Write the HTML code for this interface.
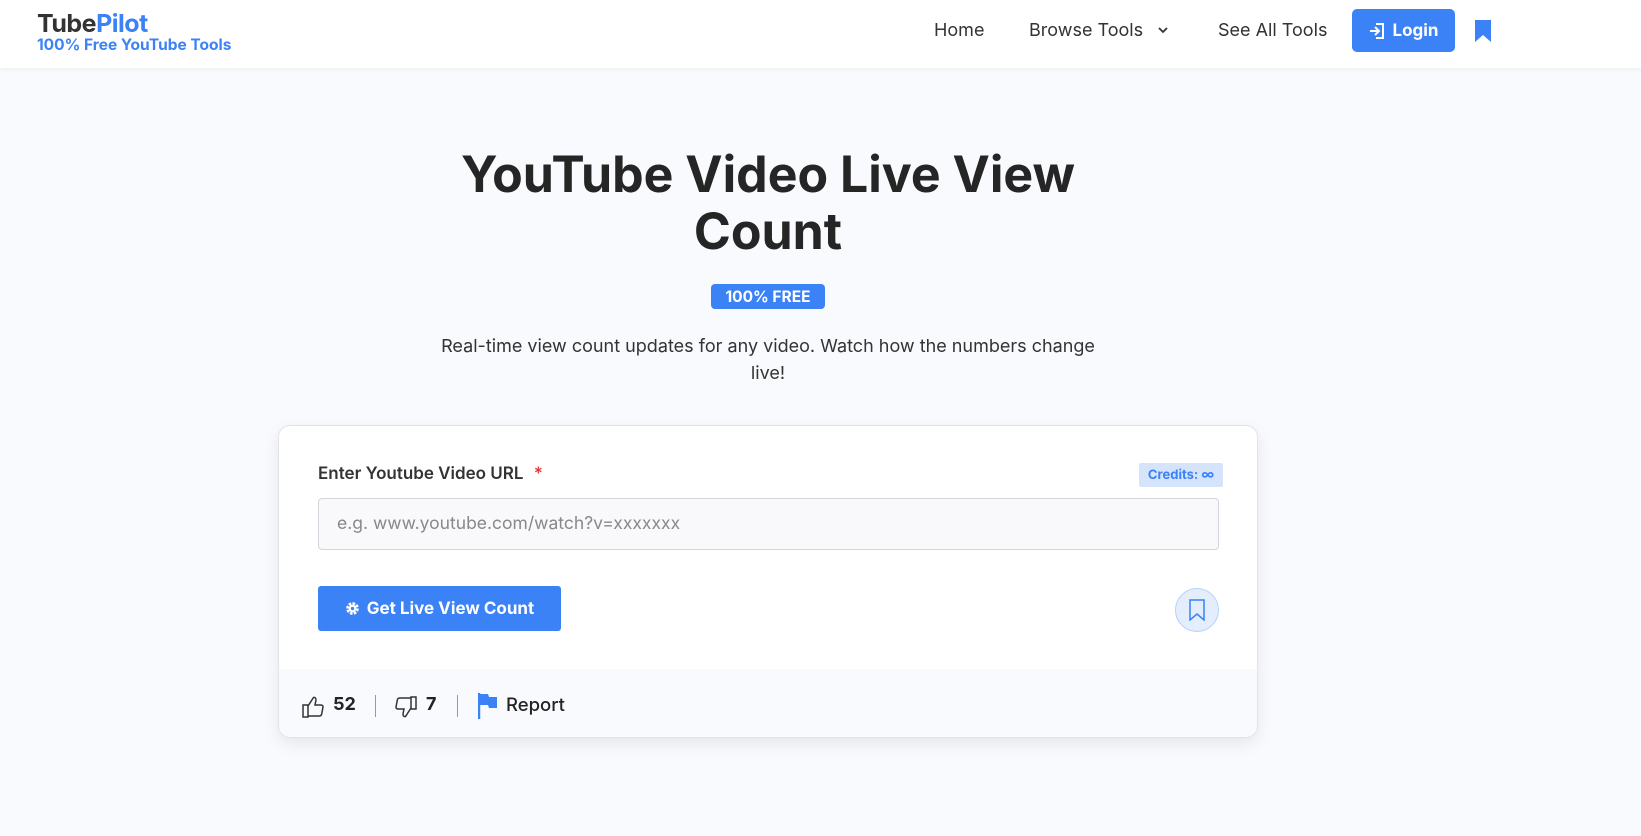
<!DOCTYPE html>
<html><head><meta charset="utf-8"><style>
*{box-sizing:border-box;margin:0;padding:0}
body{width:1641px;height:836px;background:#f9fafd;font-family:"Inter","Liberation Sans",sans-serif;color:#222;position:relative;overflow:hidden}
.hdr{position:absolute;left:0;top:0;width:1641px;height:68px;background:#fff;box-shadow:0 1px 4px rgba(0,0,0,.06)}
.abs{position:absolute}
.logo{left:37px;top:9px;font-size:25px;font-weight:700;color:#333;letter-spacing:-.5px}
.logo span{color:#3b82f6}
.sub{left:37px;top:35px;font-size:15.5px;font-weight:700;color:#3b82f6}
.nav{top:20px;font-size:18px;color:#333}
.login{left:1352px;top:9px;width:103px;height:43px;background:#3b82f6;border-radius:5px;color:#fff;font-weight:700;font-size:17px;display:flex;align-items:center;justify-content:center;gap:8px}
h1{position:absolute;left:0;width:1536px;top:147px;text-align:center;font-size:50px;font-weight:700;line-height:57px;color:#252525}
.badge{left:711px;top:284px;width:114px;height:25px;background:#3b82f6;color:#fff;border-radius:4px;font-weight:700;font-size:15.5px;text-align:center;line-height:25px}
.desc{left:0;width:1536px;top:333px;text-align:center;font-size:18px;line-height:27px;color:#333}
.card{left:278px;top:425px;width:980px;height:313px;background:#fff;border:1px solid #e1e3ea;border-radius:12px;box-shadow:0 6px 16px rgba(0,0,0,.08);overflow:hidden}
.foot{position:absolute;left:0;top:243px;width:100%;height:70px;background:#f9fafd}
</style></head><body>
<div class="hdr">
<div class="abs logo">Tube<span>Pilot</span></div>
<div class="abs sub">100% Free YouTube Tools</div>
<div class="abs nav" style="left:934px">Home</div>
<div class="abs nav" style="left:1029px">Browse Tools</div>
<svg class="abs" style="left:1157px;top:25px" width="12" height="10" viewBox="0 0 12 10"><path d="M2 3l4 4 4-4" fill="none" stroke="#333" stroke-width="1.8"/></svg>
<div class="abs nav" style="left:1218px">See All Tools</div>
<div class="abs login"><svg width="16" height="18" viewBox="0 0 16 18"><path d="M7 2h7v14H7" fill="none" stroke="#fff" stroke-width="2"/><path d="M1 9h8M6 5l4 4-4 4" fill="none" stroke="#fff" stroke-width="2"/></svg>Login</div>
<svg class="abs" style="left:1475px;top:20px" width="16" height="22" viewBox="0 0 16 22"><path d="M0 0h16v22l-8-7-8 7z" fill="#3b82f6"/></svg>
</div>
<h1>YouTube Video Live View<br>Count</h1>
<div class="abs badge">100% FREE</div>
<div class="abs desc">Real-time view count updates for any video. Watch how the numbers change<br>live!</div>
<div class="abs card">
<div class="abs" style="left:39px;top:38px;font-size:17px;font-weight:600;color:#333">Enter Youtube Video URL <span style="color:#e53935;margin-left:6px">*</span></div>
<div class="abs" style="left:860px;top:37px;width:84px;height:24px;background:#d6e4fb;color:#3b82f6;font-size:13px;font-weight:700;text-align:center;line-height:24px;border-radius:2px">Credits: ∞</div>
<div class="abs" style="left:39px;top:72px;width:901px;height:52px;border:1px solid #d4d6dd;border-radius:4px;background:#f9f9fc;font-size:17.5px;color:#888;padding:14px 18px">e.g. www.youtube.com/watch?v=xxxxxxx</div>
<div class="abs" style="left:39px;top:160px;width:243px;height:45px;background:#3b82f6;border-radius:3px;color:#fff;font-weight:700;font-size:17px;display:flex;align-items:center;justify-content:center;gap:7px"><svg width="15" height="15" viewBox="0 0 16 16"><circle cx="8" cy="8" r="5" fill="none" stroke="#fff" stroke-width="3.5" stroke-dasharray="2.6 1.3"/><circle cx="8" cy="8" r="4" fill="#fff"/><circle cx="8" cy="8" r="1.8" fill="#3b82f6"/></svg>Get Live View Count</div>
<div class="abs" style="left:896px;top:162px;width:44px;height:44px;border-radius:50%;background:#e3edfc;border:1px solid #b8d0fa;display:flex;align-items:center;justify-content:center"><svg width="16" height="22" viewBox="0 0 16 22"><path d="M1 1h14v20l-7-6-7 6z" fill="none" stroke="#3b82f6" stroke-width="1.5"/></svg></div>
<div class="foot">
<svg class="abs" style="left:22px;top:26px" width="24" height="24" viewBox="0 0 24 24"><path d="M2 10h5v12H2zM7 21h11c1.5 0 2.5-1 2.7-2l1.3-7c.2-1.2-.7-2-2-2h-6l1-5c.2-1.5-1-3-2.5-2.5L7 11" fill="none" stroke="#333" stroke-width="1.5"/></svg>
<div class="abs" style="left:54px;top:25px;font-size:18px;font-weight:700">52</div>
<div class="abs" style="left:96px;top:26px;width:1px;height:22px;background:#999"></div>
<svg class="abs" style="left:115px;top:26px" width="24" height="24" viewBox="0 0 24 24"><path d="M22 14h-5V2h5zM17 3H6C4.5 3 3.5 4 3.3 5L2 12c-.2 1.2.7 2 2 2h6l-1 5c-.2 1.5 1 3 2.5 2.5L17 13" fill="none" stroke="#333" stroke-width="1.5"/></svg>
<div class="abs" style="left:147px;top:25px;font-size:18px;font-weight:700">7</div>
<div class="abs" style="left:178px;top:26px;width:1px;height:22px;background:#999"></div>
<svg class="abs" style="left:199px;top:24px" width="20" height="26" viewBox="0 0 20 26"><path d="M1 0v26" stroke="#3b82f6" stroke-width="2.5"/><path d="M2 1h8l1 3h8v11h-8l-1-3H2z" fill="#3b82f6"/></svg>
<div class="abs" style="left:227px;top:25px;font-size:18.5px;font-weight:500">Report</div>
</div>
</div>
</body></html>
